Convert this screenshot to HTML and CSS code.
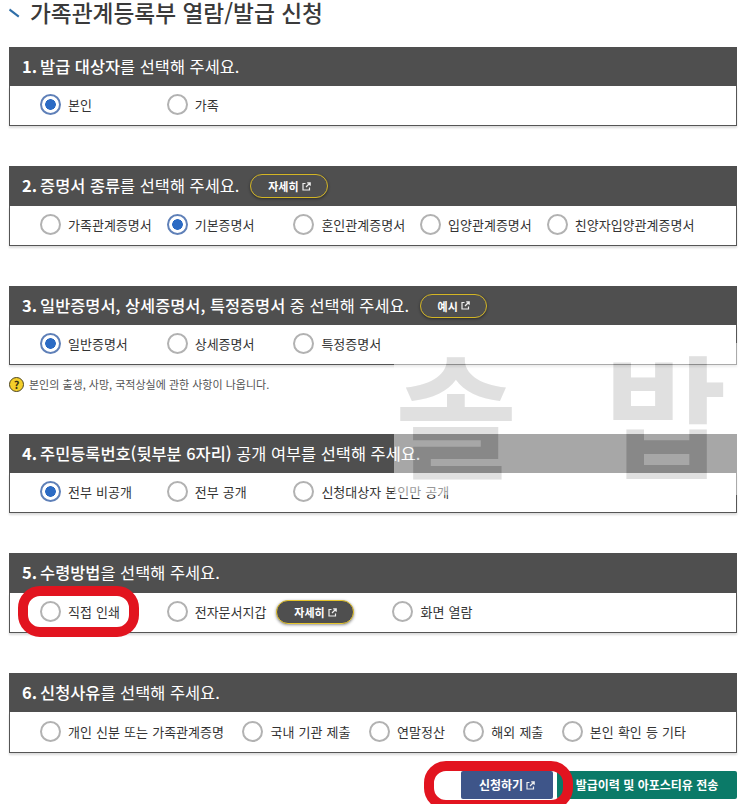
FILE: index.html
```html
<!DOCTYPE html>
<html lang="ko">
<head>
    <meta charset="UTF-8">
    <title>가족관계등록부 열람/발급 신청</title>
    <link rel="stylesheet" href="styles.css">
</head>
<body>
<div class="page">
    <h2 class="title">
        <svg class="title-mark" width="11" height="10" viewBox="0 0 11 10"><path d="M1 0.4 L10.4 7.8 L9.2 9.6 L0 2.4 Z" fill="#2f6ea8"/></svg>
        가족관계등록부 열람/발급 신청
    </h2>

    <section class="step">
        <h3 class="step-head"><span><b>1.</b> <strong>발급 대상자</strong>를 선택해 주세요.</span></h3>
        <div class="step-body">
            <label class="opt"><input type="radio" name="a" checked>본인</label>
            <label class="opt"><input type="radio" name="a">가족</label>
        </div>
    </section>

    <section class="step">
        <h3 class="step-head"><span><b>2.</b> <strong>증명서 종류</strong>를 선택해 주세요.</span>
            <a class="more">자세히<svg class="ext" width="9" height="9" viewBox="0 0 9 9"><path d="M3.5 1.5H1V8H7.5V5.5M4 5L8 1M5.2 0.8H8.2V3.8" fill="none" stroke="currentColor" stroke-width="1.2"/></svg></a>
        </h3>
        <div class="step-body">
            <label class="opt"><input type="radio" name="b">가족관계증명서</label>
            <label class="opt"><input type="radio" name="b" checked>기본증명서</label>
            <label class="opt"><input type="radio" name="b">혼인관계증명서</label>
            <label class="opt"><input type="radio" name="b">입양관계증명서</label>
            <label class="opt"><input type="radio" name="b">친양자입양관계증명서</label>
        </div>
    </section>

    <section class="step step-noted">
        <h3 class="step-head"><span><b>3.</b> <strong>일반증명서, 상세증명서, 특정증명서</strong> 중 선택해 주세요.</span>
            <a class="more more-short">예시<svg class="ext" width="9" height="9" viewBox="0 0 9 9"><path d="M3.5 1.5H1V8H7.5V5.5M4 5L8 1M5.2 0.8H8.2V3.8" fill="none" stroke="currentColor" stroke-width="1.2"/></svg></a>
        </h3>
        <div class="step-body">
            <label class="opt"><input type="radio" name="c" checked>일반증명서</label>
            <label class="opt"><input type="radio" name="c">상세증명서</label>
            <label class="opt"><input type="radio" name="c">특정증명서</label>
        </div>
        <p class="note"><span class="note-icon">?</span>본인의 출생, 사망, 국적상실에 관한 사항이 나옵니다.</p>
    </section>

    <section class="step">
        <h3 class="step-head"><span><b>4.</b> <strong>주민등록번호(뒷부분 6자리)</strong> 공개 여부를 선택해 주세요.</span></h3>
        <div class="step-body">
            <label class="opt"><input type="radio" name="d" checked>전부 비공개</label>
            <label class="opt"><input type="radio" name="d">전부 공개</label>
            <label class="opt"><input type="radio" name="d">신청대상자 본인만 공개</label>
        </div>
    </section>

    <section class="step">
        <h3 class="step-head"><span><b>5.</b> <strong>수령방법</strong>을 선택해 주세요.</span></h3>
        <div class="step-body">
            <label class="opt"><input type="radio" name="e">직접 인쇄</label>
            <label class="opt"><input type="radio" name="e">전자문서지갑<a class="more more-filled">자세히<svg class="ext" width="9" height="9" viewBox="0 0 9 9"><path d="M3.5 1.5H1V8H7.5V5.5M4 5L8 1M5.2 0.8H8.2V3.8" fill="none" stroke="currentColor" stroke-width="1.2"/></svg></a></label>
            <label class="opt"><input type="radio" name="e">화면 열람</label>
        </div>
    </section>

    <section class="step">
        <h3 class="step-head"><span><b>6.</b> <strong>신청사유</strong>를 선택해 주세요.</span></h3>
        <div class="step-body step-body-tight">
            <label class="opt"><input type="radio" name="f">개인 신분 또는 가족관계증명</label>
            <label class="opt"><input type="radio" name="f">국내 기관 제출</label>
            <label class="opt"><input type="radio" name="f">연말정산</label>
            <label class="opt"><input type="radio" name="f">해외 제출</label>
            <label class="opt"><input type="radio" name="f">본인 확인 등 기타</label>
        </div>
    </section>

    <div class="actions">
        <button class="btn btn-apply">신청하기<svg class="ext" width="9" height="9" viewBox="0 0 9 9"><path d="M3.5 1.5H1V8H7.5V5.5M4 5L8 1M5.2 0.8H8.2V3.8" fill="none" stroke="currentColor" stroke-width="1.2"/></svg></button>
        <button class="btn btn-history">발급이력 및 아포스티유 전송</button>
    </div>

    <div class="watermark"><span>솔</span><span>밥</span></div>
    <div class="ring ring-print"></div>
    <div class="ring ring-apply"></div>
</div>
</body>
</html>
```

FILE: styles.css
```css
html, body {
    margin: 0;
    padding: 0;
    height: 804px;
    overflow: hidden;
    background: #fff;
}
.page {
    position: relative;
    height: 804px;
    overflow: hidden;
    padding: 0 5px 0 9px;
    font-family: "Noto Sans CJK KR", "Noto Sans", sans-serif;
    color: #333;
}
.title {
    display: flex;
    align-items: center;
    height: 26px;
    margin: 0 0 20.75px;
    font-size: 22.7px;
    line-height: 26px;
    font-weight: 500;
    color: #3a3a3a;
    white-space: nowrap;
}
.title-mark {
    margin: 0 10px 0 0;
}
.step {
    margin-bottom: 40px;
}
.step-noted {
    margin-bottom: 0;
    height: 148px;
}
.step-head {
    display: flex;
    align-items: center;
    height: 39.5px;
    box-sizing: border-box;
    margin: 0;
    padding: 0 0 2px 13px;
    background: #4f4f4f;
    color: #fff;
    font-size: 16.4px;
    font-weight: 400;
    white-space: nowrap;
}
.step-head b {
    font-weight: 700;
    margin-right: -1.5px;
}
.step-head strong {
    font-weight: 500;
}
.step-body {
    display: flex;
    align-items: center;
    height: 40px;
    box-sizing: border-box;
    padding: 0 0 2px 30px;
    background: #fff;
    border: 1px solid #555;
    border-top: 0;
    box-shadow: 0 2px 2px rgba(0, 0, 0, 0.14);
}
.step-body-tight {
    gap: 18.5px;
    height: 41px;
}
.opt {
    display: flex;
    align-items: center;
    min-width: 126.7px;
    font-size: 13px;
    word-spacing: 0.5px;
    color: #333;
    white-space: nowrap;
}
.step-body-tight .opt {
    min-width: 0;
}
.opt input {
    flex: none;
    appearance: none;
    box-sizing: border-box;
    width: 21px;
    height: 21px;
    margin: 0 7px 0 0;
    border: 2px solid #b2b2b2;
    border-radius: 50%;
    background: #fff;
}
.opt input:checked {
    border-color: #5f80b8;
    background: radial-gradient(circle, #2c6bc4 0, #2c6bc4 5px, #fff 5.6px);
}
.more {
    display: inline-flex;
    align-items: center;
    justify-content: center;
    gap: 3px;
    box-sizing: border-box;
    width: 78px;
    height: 24px;
    margin: 2px 0 0 11px;
    border: 1.5px solid #d3b524;
    border-radius: 12px;
    box-shadow: 0 1px 3px rgba(0, 0, 0, 0.45);
    color: #fff;
    font-size: 11px;
    font-weight: 700;
}
.more-short {
    width: 67px;
}
.more-filled {
    background: #4f4f4f;
    border-color: #e6c52b;
    margin: 2px 38px 0 10px;
}
.ext {
    color: #eee;
}
.note {
    display: flex;
    align-items: center;
    height: 16px;
    margin: 11px 0 0;
    font-size: 11px;
    color: #555;
    white-space: nowrap;
}
.note-icon {
    display: inline-flex;
    align-items: center;
    justify-content: center;
    box-sizing: border-box;
    width: 15px;
    height: 15px;
    margin-right: 5px;
    border: 1.5px solid #4d4520;
    border-radius: 50%;
    background: #f4cf2a;
    color: #3a3213;
    font-size: 11px;
    font-weight: 700;
}
.actions {
    display: flex;
    justify-content: flex-end;
    gap: 4px;
    margin-top: -22px;
}
.btn {
    height: 28px;
    padding: 0 0 1px;
    border: 0;
    border-radius: 2px;
    color: #fff;
    font-family: inherit;
    font-size: 12px;
    font-weight: 700;
}
.btn-apply {
    width: 92px;
    background: #3e5589;
}
.btn-apply .ext {
    margin-left: 3px;
}
.btn-history {
    width: 180px;
    background: #0b7a68;
}
/* overlays */
.watermark {
    position: absolute;
    left: 394px;
    top: 343px;
    width: 348px;
    height: 152px;
    display: flex;
    gap: 87px;
    padding-left: 1px;
    box-sizing: border-box;
    background: #fff;
    opacity: 0.5;
    color: #c2c2c2;
    font-size: 133px;
    font-weight: 700;
    line-height: 135px;
}
.ring {
    position: absolute;
    box-sizing: border-box;
    border: 10px solid #e2141f;
    border-radius: 22px;
}
.ring-print {
    left: 18px;
    top: 586px;
    width: 121px;
    height: 51px;
}
.ring-apply {
    left: 424px;
    top: 761px;
    width: 149px;
    height: 49px;
}
```
